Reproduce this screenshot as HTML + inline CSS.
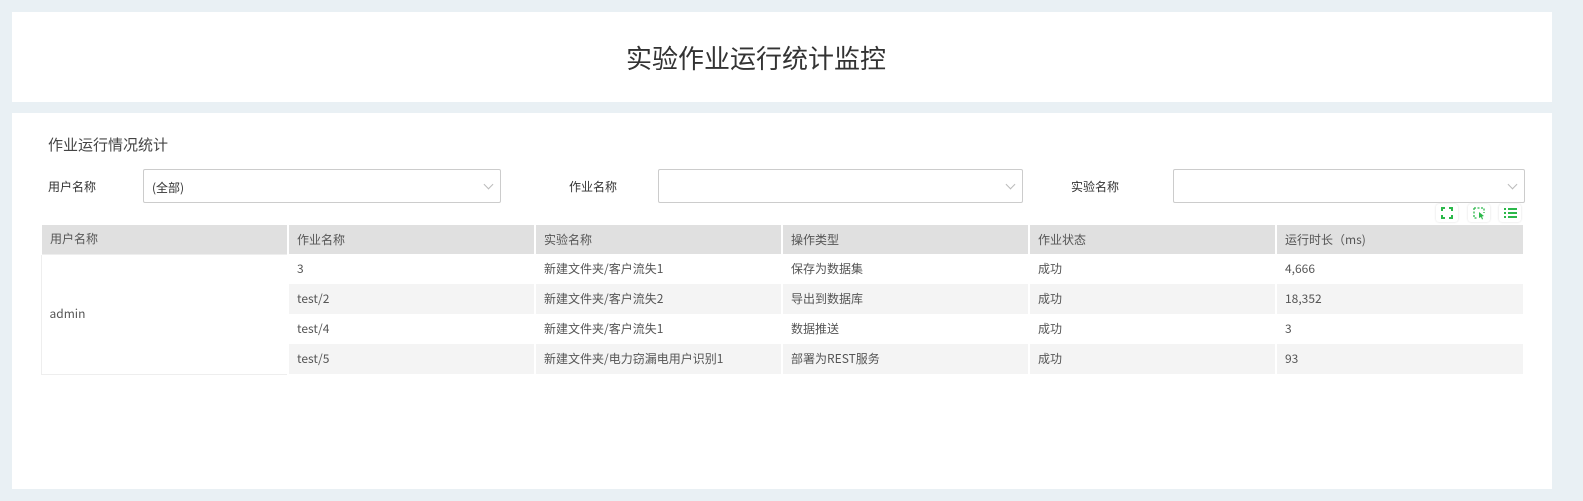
<!DOCTYPE html>
<html><head><meta charset="utf-8"><style>
*{margin:0;padding:0;box-sizing:border-box}
body{width:1583px;height:501px;background:#e9f0f4;font-family:"Noto Sans CJK SC","Liberation Sans",sans-serif;color:#555;position:relative;overflow:hidden;font-size:12px}
.p{position:absolute;background:#fff}
.abs{position:absolute;white-space:nowrap;line-height:1.2}
.sel{position:absolute;border:1px solid #ccc;border-radius:2px;height:34px;background:#fff}
.sel span{position:absolute;left:8px;top:9px;color:#333}
.sel i{position:absolute;right:8px;top:11px;width:7px;height:7px;border-right:1px solid #bbb;border-bottom:1px solid #bbb;transform:rotate(45deg)}
table{position:absolute;left:40px;top:225px;width:1483px;border-collapse:collapse;table-layout:fixed}
td,th{font-weight:normal;text-align:left;padding-left:8px;height:30px;border-left:2px solid #fff;color:#555;vertical-align:middle;line-height:16px}
th{background:#e0e0e0;height:29px}
tr.a td{background:#f4f4f4}
td.u{border:1px solid #eee;background:#fff!important}
.ic{position:absolute;top:204px;width:22px;height:18px;background:#fff;border-radius:3px;box-shadow:0 0 2px #ddd}
</style></head><body>
<div class="p" style="left:12px;top:12px;width:1540px;height:90px"></div>
<div class="abs" style="left:626px;top:42px;font-size:26px;color:#333">实验作业运行统计监控</div>
<div class="p" style="left:12px;top:113px;width:1540px;height:376px"></div>
<div class="abs" style="left:48px;top:136px;font-size:15px;color:#444">作业运行情况统计</div>
<div class="abs" style="left:48px;top:180px;color:#333">用户名称</div>
<div class="sel" style="left:143px;top:169px;width:358px"><span>(全部)</span><i></i></div>
<div class="abs" style="left:569px;top:180px;color:#333">作业名称</div>
<div class="sel" style="left:658px;top:169px;width:365px"><i></i></div>
<div class="abs" style="left:1071px;top:180px;color:#333">实验名称</div>
<div class="sel" style="left:1173px;top:169px;width:352px"><i></i></div>
<div class="ic" style="left:1436px"><svg width="22" height="18" viewBox="0 0 22 18" fill="none" stroke="#2bb84a" stroke-width="2"><path d="M6 7V4h3M13 4h3v3M6 11v3h3M13 14h3v-3"/></svg></div>
<div class="ic" style="left:1468px"><svg width="22" height="18" viewBox="0 0 22 18" fill="none" stroke="#2bb84a" stroke-width="1.3" stroke-dasharray="2 1.5"><path d="M6 4h10v5M6 4v10h4"/><path d="M11 8l5 4-2 .5 1 2.5-1 .5-1-2.5-2 1z" fill="#2bb84a" stroke="none"/></svg></div>
<div class="ic" style="left:1499px"><svg width="22" height="18" viewBox="0 0 22 18" stroke="#2bb84a" stroke-width="2"><path d="M5 5h2M9 5h9M5 9h2M9 9h9M5 13h2M9 13h9"/></svg></div>
<table>
<tr><th>用户名称</th><th>作业名称</th><th>实验名称</th><th>操作类型</th><th>作业状态</th><th>运行时长（ms)</th></tr>
<tr><td class="u" rowspan="4">admin</td><td>3</td><td>新建文件夹/客户流失1</td><td>保存为数据集</td><td>成功</td><td>4,666</td></tr>
<tr class="a"><td>test/2</td><td>新建文件夹/客户流失2</td><td>导出到数据库</td><td>成功</td><td>18,352</td></tr>
<tr><td>test/4</td><td>新建文件夹/客户流失1</td><td>数据推送</td><td>成功</td><td>3</td></tr>
<tr class="a"><td>test/5</td><td>新建文件夹/电力窃漏电用户识别1</td><td>部署为REST服务</td><td>成功</td><td>93</td></tr>
</table>
</body></html>
